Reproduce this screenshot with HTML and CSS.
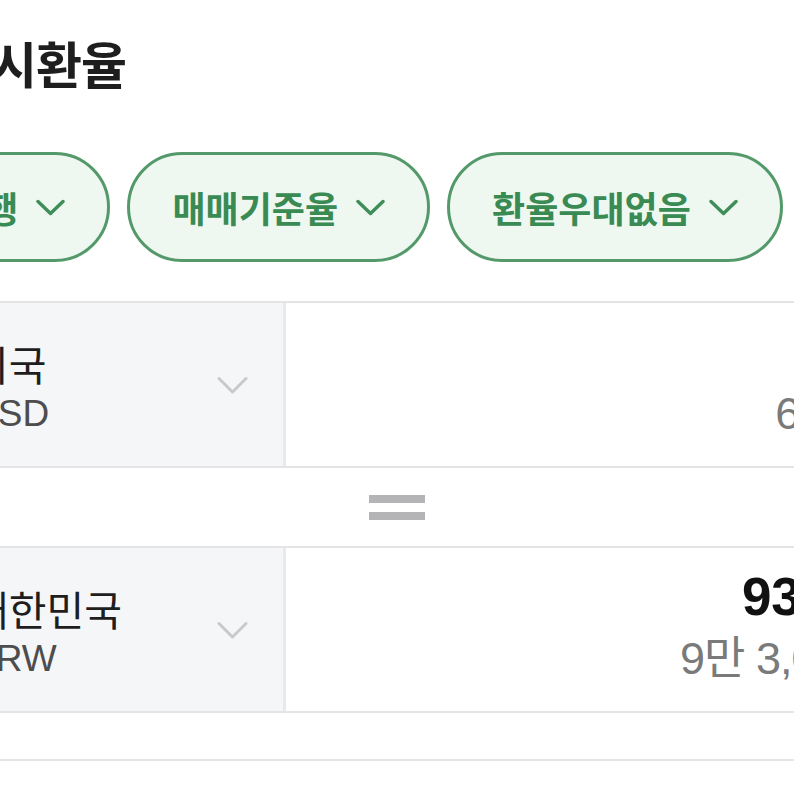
FILE: index.html
```html
<!DOCTYPE html>
<html lang="ko">
<head>
<meta charset="utf-8">
<title>고시환율</title>
<link rel="stylesheet" href="styles.css">
</head>
<body>
<div class="page">
  <h1 class="title">고시환율</h1>

  <div class="chips">
    <button class="chip"><span class="chip-label">하나은행</span>
      <svg class="chip-chev" width="29" height="17" viewBox="0 0 29 17"><path d="M2 2.5 L14.5 14.5 L27 2.5" fill="none" stroke="#3f8d58" stroke-width="3.4" stroke-linecap="round" stroke-linejoin="round"/></svg>
    </button>
    <button class="chip"><span class="chip-label">매매기준율</span>
      <svg class="chip-chev" width="29" height="17" viewBox="0 0 29 17"><path d="M2 2.5 L14.5 14.5 L27 2.5" fill="none" stroke="#3f8d58" stroke-width="3.4" stroke-linecap="round" stroke-linejoin="round"/></svg>
    </button>
    <button class="chip"><span class="chip-label">환율우대없음</span>
      <svg class="chip-chev" width="29" height="17" viewBox="0 0 29 17"><path d="M2 2.5 L14.5 14.5 L27 2.5" fill="none" stroke="#3f8d58" stroke-width="3.4" stroke-linecap="round" stroke-linejoin="round"/></svg>
    </button>
  </div>

  <div class="converter">
    <div class="row">
      <div class="country">
        <div class="names">
          <div class="name">미국</div>
          <div class="code">USD</div>
        </div>
        <svg class="sel-chev" width="31" height="19" viewBox="0 0 31 19"><path d="M2 2.5 L15.5 16 L29 2.5" fill="none" stroke="#c9c9cc" stroke-width="3" stroke-linecap="round" stroke-linejoin="round"/></svg>
      </div>
      <div class="amount">
        <div class="num">67</div>
        <div class="sub">67달러</div>
      </div>
    </div>

    <div class="equals"><span class="bar"></span><span class="bar"></span></div>

    <div class="row">
      <div class="country">
        <div class="names">
          <div class="name">대한민국</div>
          <div class="code">KRW</div>
        </div>
        <svg class="sel-chev" width="31" height="19" viewBox="0 0 31 19"><path d="M2 2.5 L15.5 16 L29 2.5" fill="none" stroke="#c9c9cc" stroke-width="3" stroke-linecap="round" stroke-linejoin="round"/></svg>
      </div>
      <div class="amount">
        <div class="num">93,063</div>
        <div class="sub">9만 3,063원</div>
      </div>
    </div>

    <div class="spacer"></div>
  </div>
</div>
</body>
</html>
```

FILE: styles.css
```css
html, body {
  margin: 0;
  padding: 0;
  overflow: hidden;
  background: #ffffff;
}

body {
  width: 794px;
  height: 794px;
  font-family: "Liberation Sans", "Noto Sans CJK KR", sans-serif;
  color: #1a1a1a;
}

.page {
  margin-left: -60px;
  width: 1060px;
}

.title {
  margin: 32px 0 0 0;
  padding-left: 6px;
  font-family: "Noto Sans CJK KR", sans-serif;
  font-size: 50px;
  font-weight: 700;
  letter-spacing: -1px;
  line-height: 60px;
  color: #1e1e1e;
  white-space: nowrap;
}

.chips {
  display: flex;
  gap: 17px;
  margin: 60px 0 0 -99px;
}

.chip {
  box-sizing: border-box;
  height: 110px;
  display: flex;
  align-items: center;
  gap: 18px;
  padding: 0 42px 0 42px;
  border: 3px solid #53996a;
  border-radius: 55px;
  background: #eef8f1;
  font-family: "Noto Sans CJK KR", sans-serif;
  font-size: 36px;
  font-weight: 600;
  letter-spacing: 0;
  color: #3a8a53;
  white-space: nowrap;
}

.chip-label {
  display: block;
  line-height: 40px;
}

.chip-chev {
  display: block;
  flex: none;
}

.converter {
  margin-top: 39px;
}

.row {
  display: flex;
  height: 167px;
  box-sizing: border-box;
  border-top: 2px solid #e4e4e7;
  border-bottom: 2px solid #e4e4e7;
}

.country {
  width: 346px;
  box-sizing: border-box;
  display: flex;
  align-items: center;
  justify-content: space-between;
  padding: 0 35px 0 31px;
  background: #f5f6f8;
  border-right: 3px solid #e9e9ec;
}

.names {
  display: flex;
  flex-direction: column;
  padding-top: 6px;
}

.name {
  font-family: "Noto Sans CJK KR", sans-serif;
  font-size: 41px;
  letter-spacing: 0;
  line-height: 46px;
  color: #1e1e1e;
  white-space: nowrap;
}

.code {
  font-size: 37px;
  line-height: 44px;
  margin-top: 6px;
  color: #4d4d4d;
}

.sel-chev {
  display: block;
  flex: none;
  margin-top: 2px;
}

.amount {
  flex: 1;
  display: flex;
  flex-direction: column;
  align-items: flex-end;
  padding: 21px 96px 0 0;
  background: #ffffff;
}

.num {
  font-size: 53px;
  font-weight: 700;
  line-height: 56px;
  color: #111111;
}

.sub {
  margin-top: 8px;
  font-size: 45px;
  line-height: 52px;
  letter-spacing: -1px;
  color: #7a7a7a;
  white-space: nowrap;
}

.equals {
  height: 78px;
  width: 794px;
  margin-left: 60px;
  display: flex;
  flex-direction: column;
  align-items: center;
  justify-content: center;
  gap: 9px;
}

.bar {
  display: block;
  width: 56px;
  height: 8px;
  background: #b4b4b6;
}

.spacer {
  height: 46px;
  border-bottom: 2px solid #e4e4e7;
}
```
